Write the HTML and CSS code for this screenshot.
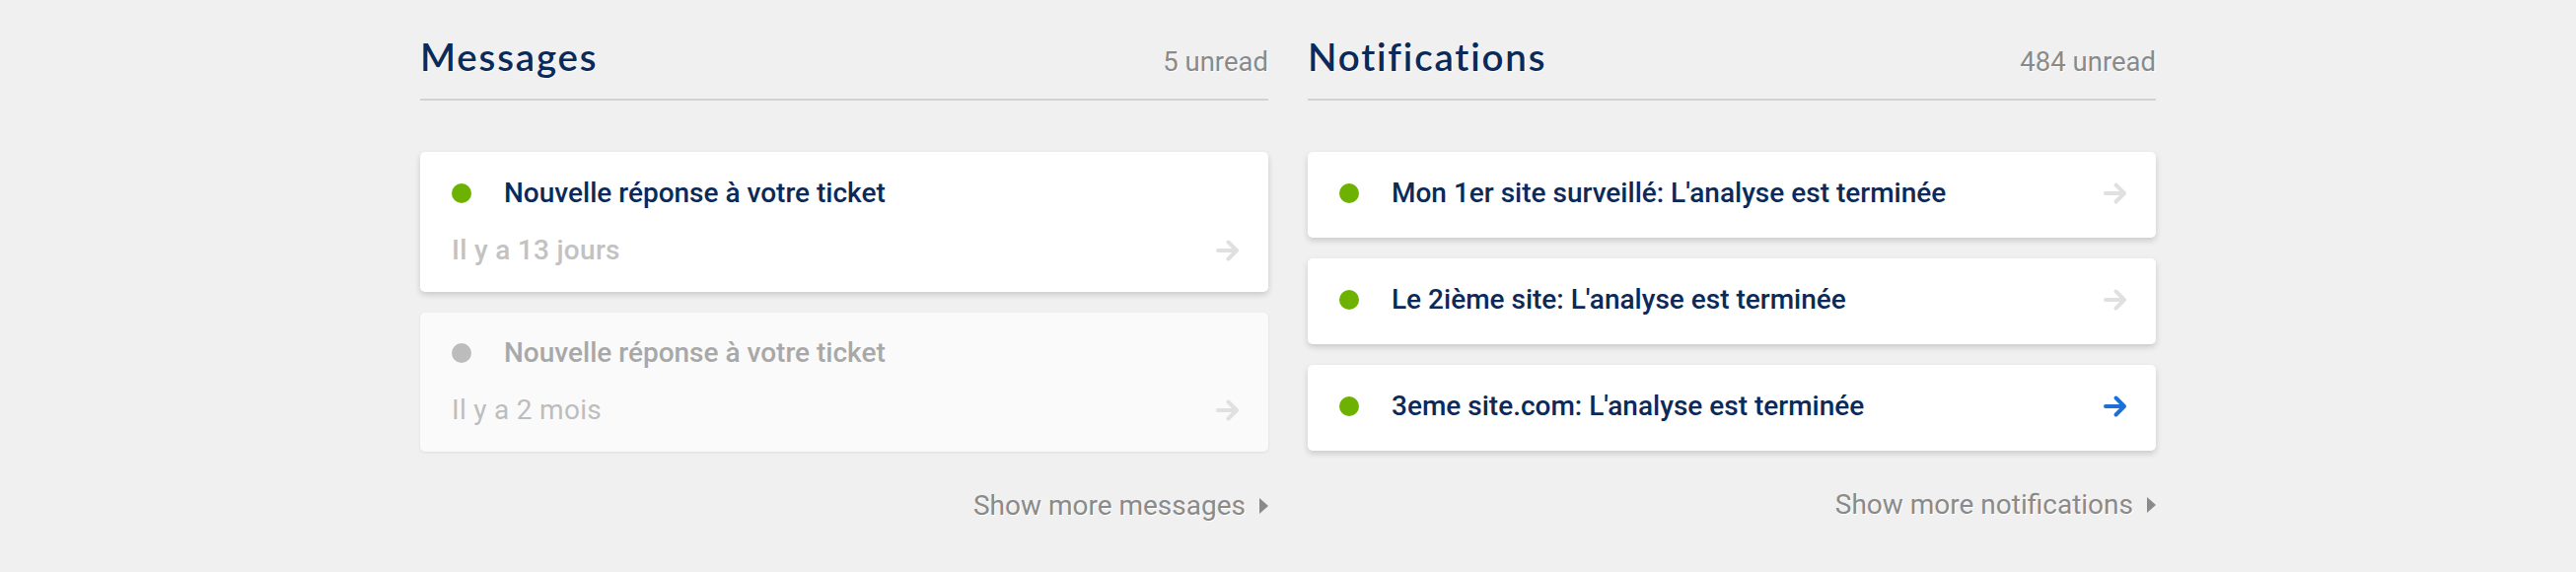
FILE: index.html
```html
<!DOCTYPE html>
<html lang="fr">
<head>
<meta charset="utf-8">
<title>Inbox</title>
<link rel="stylesheet" href="styles.css">
</head>
<body>
<main class="board">
  <section class="panel">
    <header class="panel-head">
      <h2 class="panel-title">Messages</h2>
      <span class="panel-count">5 unread</span>
    </header>
    <ul class="list">
      <li class="card card-msg">
        <div class="card-row">
          <span class="dot"></span>
          <span class="card-title">Nouvelle réponse à votre ticket</span>
        </div>
        <div class="card-row card-meta">
          <span class="card-date">Il y a 13 jours</span>
          <svg class="arrow" viewBox="0 0 26 24" width="26" height="24"><path d="M3 12H22M13.5 3.5L22 12L13.5 20.5" fill="none" stroke="currentColor" stroke-width="4" stroke-linecap="round" stroke-linejoin="round"/></svg>
        </div>
      </li>
      <li class="card card-msg card-read">
        <div class="card-row">
          <span class="dot"></span>
          <span class="card-title">Nouvelle réponse à votre ticket</span>
        </div>
        <div class="card-row card-meta">
          <span class="card-date">Il y a 2 mois</span>
          <svg class="arrow" viewBox="0 0 26 24" width="26" height="24"><path d="M3 12H22M13.5 3.5L22 12L13.5 20.5" fill="none" stroke="currentColor" stroke-width="4" stroke-linecap="round" stroke-linejoin="round"/></svg>
        </div>
      </li>
    </ul>
    <a class="more" href="#">Show more messages <span class="tri"></span></a>
  </section>
  <section class="panel">
    <header class="panel-head">
      <h2 class="panel-title">Notifications</h2>
      <span class="panel-count">484 unread</span>
    </header>
    <ul class="list">
      <li class="card card-notif">
        <div class="card-row">
          <span class="dot"></span>
          <span class="card-title">Mon 1er site surveillé: L'analyse est terminée</span>
          <svg class="arrow" viewBox="0 0 26 24" width="26" height="24"><path d="M3 12H22M13.5 3.5L22 12L13.5 20.5" fill="none" stroke="currentColor" stroke-width="4" stroke-linecap="round" stroke-linejoin="round"/></svg>
        </div>
      </li>
      <li class="card card-notif">
        <div class="card-row">
          <span class="dot"></span>
          <span class="card-title">Le 2ième site: L'analyse est terminée</span>
          <svg class="arrow" viewBox="0 0 26 24" width="26" height="24"><path d="M3 12H22M13.5 3.5L22 12L13.5 20.5" fill="none" stroke="currentColor" stroke-width="4" stroke-linecap="round" stroke-linejoin="round"/></svg>
        </div>
      </li>
      <li class="card card-notif card-active">
        <div class="card-row">
          <span class="dot"></span>
          <span class="card-title">3eme site.com: L'analyse est terminée</span>
          <svg class="arrow" viewBox="0 0 26 24" width="26" height="24"><path d="M3 12H22M13.5 3.5L22 12L13.5 20.5" fill="none" stroke="currentColor" stroke-width="4" stroke-linecap="round" stroke-linejoin="round"/></svg>
        </div>
      </li>
    </ul>
    <a class="more" href="#">Show more notifications <span class="tri"></span></a>
  </section>
</main>
</body>
</html>
```

FILE: styles.css
```css
* { box-sizing: border-box; }
html, body { margin: 0; padding: 0; }
body {
  background: #f0f0f0;
  font-family: Roboto, "Liberation Sans", Arial, sans-serif;
  font-size: 28px;
  color: #0b2a58;
}
.board {
  display: grid;
  grid-template-columns: 860px 860px;
  column-gap: 40px;
  justify-content: center;
  padding-top: 35px;
}
.panel { display: flex; flex-direction: column; }
.panel-head {
  display: flex;
  justify-content: space-between;
  align-items: baseline;
  border-bottom: 2px solid #d2d2d2;
  padding-bottom: 21px;
}
.panel-title {
  margin: 0;
  font-family: Lato, "Open Sans", sans-serif;
  font-weight: 600;
  font-size: 38.5px;
  letter-spacing: 1.8px;
  line-height: 44px;
  color: #0a2a5a;
  text-shadow: 1px 1px 0 #fff;
}
.panel-count {
  font-size: 27.5px;
  color: #8a8a8a;
  text-shadow: 1px 1px 0 #fff;
}
.list {
  list-style: none;
  margin: 52px 0 0;
  padding: 0;
  display: flex;
  flex-direction: column;
  gap: 21px;
}
.card {
  background: #fff;
  border-radius: 5px;
  box-shadow: 0 3px 6px rgba(0,0,0,0.16);
  padding: 21.5px 28px 22px 32px;
}
.card-notif { padding-top: 22px; padding-bottom: 25px; }
.card-row {
  display: flex;
  align-items: center;
  line-height: 40px;
}
.card-meta { margin-top: 18px; justify-content: space-between; }
.dot {
  width: 20px;
  height: 20px;
  border-radius: 50%;
  background: #6db200;
  margin-right: 33px;
  flex: none;
}
.card-title {
  font-weight: 500;
  color: #0b2a58;
  flex: 1;
}
.card-date {
  font-weight: 500;
  color: #c2c2c2;
  letter-spacing: 0.3px;
}
.arrow { color: #e0e0e0; flex: none; display: block; }
.card-active .arrow { color: #1c6fd6; }
.card-read {
  background: #fafafa;
  box-shadow: 0 1px 3px rgba(0,0,0,0.08);
}
.card-read .dot { background: #bcbcbc; }
.card-read .card-title { color: #a8a8a8; }
.card-read .card-date { font-weight: 400; color: #bdbdbd; }
.more {
  align-self: flex-end;
  margin-top: 34.5px;
  display: flex;
  align-items: center;
  gap: 14px;
  line-height: 40px;
  color: #8a8a8a;
  text-decoration: none;
  text-shadow: 1px 1px 0 #fff;
}
.tri {
  width: 0;
  height: 0;
  border-top: 8px solid transparent;
  border-bottom: 8px solid transparent;
  border-left: 9px solid #8a8a8a;
}
```
